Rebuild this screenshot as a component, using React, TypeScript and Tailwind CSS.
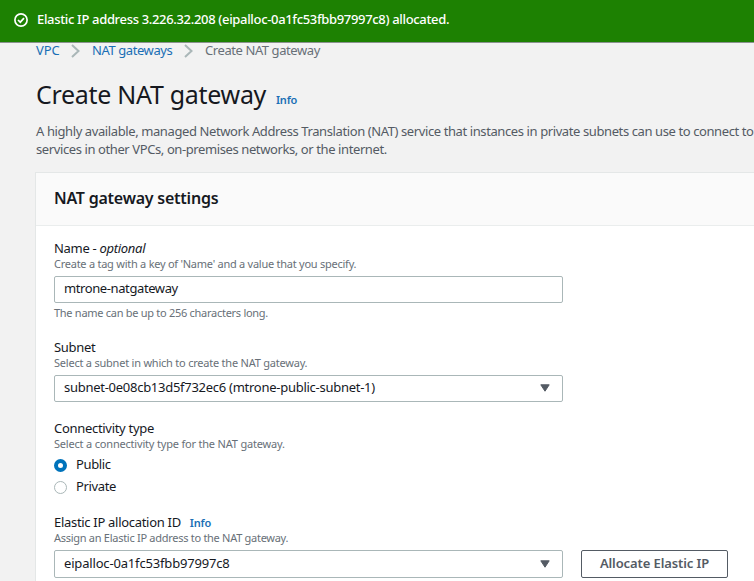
import React from "react";

function Chevron() {
  return (
    <svg width="10" height="16" viewBox="0 0 10 16" fill="none" stroke="#aab7b8" strokeWidth="2" className="shrink-0">
      <path d="M1 2 L7.5 8 L1 14" />
    </svg>
  );
}

function Caret() {
  return (
    <svg width="10" height="8" viewBox="0 0 10 8" className="shrink-0">
      <path d="M0.8 0.8 H9.2 L5 7.2 Z" fill="#545b64" stroke="#545b64" strokeWidth="1" strokeLinejoin="round" />
    </svg>
  );
}

function Hint({ children, className = "tracking-[-0.25px]" }: { children: React.ReactNode; className?: string }) {
  return <p className={"h-4 text-[11px] leading-4 text-[#687078] " + className}>{children}</p>;
}

function Label({ children }: { children: React.ReactNode }) {
  return <div className="h-4 text-[13px] leading-4 tracking-[-0.3px] text-[#16191f]">{children}</div>;
}

function Select({ value, className }: { value: string; className: string }) {
  return (
    <div className={"flex w-[509px] items-center justify-between rounded-xs border border-[#aab7b8] bg-white pr-3 pl-[9px] text-[13px] text-[#16191f] " + className}>
      <span>{value}</span>
      <Caret />
    </div>
  );
}

export default function App() {
  return (
    <div className="h-[581px] w-[754px] overflow-hidden bg-[#f2f2f2] font-['Noto_Sans','Open_Sans',sans-serif] whitespace-nowrap">
      <div className="flex h-[42px] items-center gap-[9px] bg-[#1d8102] pb-[3px] pl-[14px] text-white">
        <svg width="14" height="14" viewBox="0 0 14 14" fill="none" stroke="white" strokeWidth="1.7">
          <circle cx="7" cy="7" r="6.1" />
          <path d="M4 7 L6.3 9.2 L10 5.2" />
        </svg>
        <span className="text-[13px] font-medium tracking-[-0.33px]">Elastic IP address 3.226.32.208 (eipalloc-0a1fc53fbb97997c8) allocated.</span>
      </div>
      <div className="h-px bg-[#8b9290]" />
      <nav className="flex h-4 items-center pl-9 text-[13px] tracking-[-0.42px] text-[#1a6fb5]">
        <span className="w-[35px] tracking-[-0.1px]">VPC</span>
        <Chevron />
        <span className="ml-[11px] w-[92px]">NAT gateways</span>
        <Chevron />
        <span className="ml-[11px] text-[#687078]">Create NAT gateway</span>
      </nav>
      <header className="flex h-[63px] items-baseline pt-[15px] pl-9">
        <h1 className="w-[240px] text-[25px] leading-10 tracking-[-0.3px] text-[#16191f]">Create NAT gateway</h1>
        <span className="text-[11px] font-semibold tracking-[-0.2px] text-[#1a6fb5]">Info</span>
      </header>
      <p className="h-[50px] pl-9 text-[13px] leading-[18px] tracking-[-0.4px] text-[#545b64]">
        A highly available, managed Network Address Translation (NAT) service that instances in private subnets can use to connect to
        <br />
        services in other VPCs, on-premises networks, or the internet.
      </p>
      <main className="ml-[35px] h-[420px] border-t border-l border-[#e4e7e7] bg-white">
        <div className="flex h-[53px] items-center border-b border-[#eaeded] bg-[#fafafa] pb-[2px] pl-[18px]">
          <h2 className="text-base font-semibold tracking-[-0.23px] text-[#16191f]">NAT gateway settings</h2>
        </div>
        <div className="flex flex-col pt-[14px] pl-[18px]">
          <Label>Name - <i>optional</i></Label>
          <Hint>Create a tag with a key of 'Name' and a value that you specify.</Hint>
          <div className="mt-1 flex h-[27px] w-[509px] items-center rounded-xs border border-[#aab7b8] pb-[2px] pl-[9px] text-[13px] tracking-[-0.4px] text-[#16191f]">mtrone-natgateway</div>
          <div className="mt-[2px] mb-[18px]"><Hint className="tracking-[-0.28px]">The name can be up to 256 characters long.</Hint></div>
          <Label>Subnet</Label>
          <Hint className="tracking-[-0.22px]">Select a subnet in which to create the NAT gateway.</Hint>
          <div className="mt-1 mb-[18px]"><Select className="h-[27px] pb-px tracking-[-0.27px]" value="subnet-0e08cb13d5f732ec6 (mtrone-public-subnet-1)" /></div>
          <Label>Connectivity type</Label>
          <Hint className="tracking-[-0.19px]">Select a connectivity type for the NAT gateway.</Hint>
          <div className="mt-[2px] flex h-[22px] items-center gap-[9px] text-[13px] tracking-[-0.35px] text-[#16191f]">
            <span className="size-[13px] rounded-full border-4 border-[#0073bb]" />Public
          </div>
          <div className="flex h-[22px] items-center gap-[9px] text-[13px] tracking-[-0.35px] text-[#16191f]">
            <span className="size-[13px] rounded-full border border-[#aab7b8]" />Private
          </div>
          <div className="mt-4 flex h-4 items-baseline gap-[9px]">
            <Label>Elastic IP allocation ID</Label>
            <span className="text-[11px] leading-4 font-semibold tracking-[-0.2px] text-[#1a6fb5]">Info</span>
          </div>
          <Hint className="tracking-[-0.28px]">Assign an Elastic IP address to the NAT gateway.</Hint>
          <div className="mt-1 flex gap-[18px]">
            <Select className="h-7 pb-px tracking-[-0.17px]" value="eipalloc-0a1fc53fbb97997c8" />
            <button className="h-7 w-[147px] rounded-xs border border-[#545b64] pb-px text-[13px] font-semibold tracking-[-0.1px] text-[#545b64]">Allocate Elastic IP</button>
          </div>
        </div>
      </main>
    </div>
  );
}
